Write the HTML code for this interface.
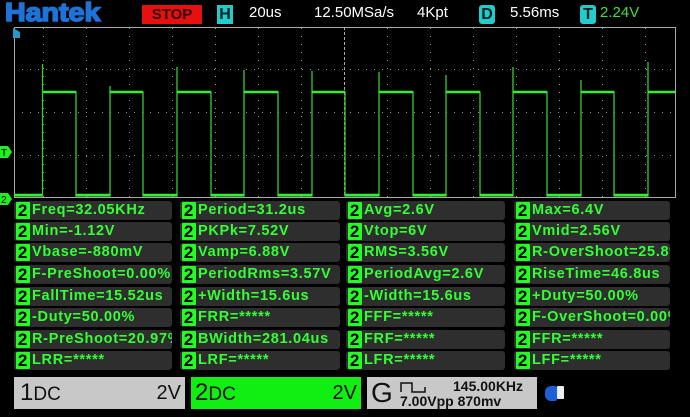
<!DOCTYPE html>
<html><head><meta charset="utf-8"><style>
body{margin:0;width:690px;height:414px;background:#000;overflow:hidden;position:relative;font-family:"Liberation Sans",sans-serif}
.a{position:absolute}
.hd{color:#fff;font-size:15px;top:4px}
.box{position:absolute;background:#2e2e2e;border-radius:3px;height:19px;overflow:hidden;color:#3f3;font-size:14.5px;font-weight:bold;line-height:19px;white-space:nowrap;letter-spacing:0.7px}
.box b{display:inline-block;background:#2f2;color:#000;width:14px;height:17px;line-height:17px;text-align:center;margin:1px 2px 0 2px;font-size:17px;vertical-align:top;border-radius:1px}
.ch{position:absolute;top:377px;height:32px;font-size:24px;line-height:32px}
</style></head><body>
<div class="a" style="left:5px;top:-3px;color:#1e73d8;font-size:26px;font-weight:900;-webkit-text-stroke:1.6px #1e73d8;letter-spacing:0px;transform:scaleX(1.1);transform-origin:left">Hantek</div>
<div class="a" style="left:142px;top:5px;width:60px;height:19px;background:#e61010;color:#300;font-weight:bold;font-size:15px;text-align:center;line-height:19px">STOP</div>
<div class="a" style="left:217px;top:5px;width:16px;height:19px;background:#2cc;color:#022;font-weight:bold;font-size:16px;text-align:center;line-height:19px">H</div>
<div class="a hd" style="left:249px">20us</div>
<div class="a hd" style="left:314px">12.50MSa/s</div>
<div class="a hd" style="left:417px">4Kpt</div>
<div class="a" style="left:479px;top:5px;width:16px;height:19px;background:#2cc;color:#022;font-weight:bold;font-size:16px;text-align:center;line-height:19px;border-radius:3px">D</div>
<div class="a hd" style="left:510px">5.56ms</div>
<div class="a" style="left:580px;top:5px;width:16px;height:19px;background:#2cc;color:#022;font-weight:bold;font-size:16px;text-align:center;line-height:19px;border-radius:3px">T</div>
<div class="a hd" style="left:600px;color:#4d4">2.24V</div>
<svg class="a" style="left:0;top:0" width="690" height="414">
<g stroke="#aaa" stroke-width="1" fill="none">
<line x1="14" y1="27.5" x2="676" y2="27.5"/>
<line x1="14.5" y1="27" x2="14.5" y2="198"/>
<line x1="675.5" y1="27" x2="675.5" y2="198"/>
<line x1="14" y1="197.5" x2="676" y2="197.5"/>
<line x1="344.5" y1="27" x2="344.5" y2="198" stroke-dasharray="3,2"/>
</g>
<g stroke="#999" stroke-width="1" stroke-dasharray="1,7">
<line x1="14" y1="69.5" x2="676" y2="69.5"/><line x1="14" y1="112.5" x2="676" y2="112.5"/><line x1="14" y1="155.5" x2="676" y2="155.5"/>
<line x1="43.5" y1="28" x2="43.5" y2="198"/><line x1="86.5" y1="28" x2="86.5" y2="198"/><line x1="129.5" y1="28" x2="129.5" y2="198"/><line x1="172.5" y1="28" x2="172.5" y2="198"/><line x1="215.5" y1="28" x2="215.5" y2="198"/><line x1="258.5" y1="28" x2="258.5" y2="198"/><line x1="301.5" y1="28" x2="301.5" y2="198"/>
<line x1="387.5" y1="28" x2="387.5" y2="198"/><line x1="430.5" y1="28" x2="430.5" y2="198"/><line x1="473.5" y1="28" x2="473.5" y2="198"/><line x1="516.5" y1="28" x2="516.5" y2="198"/><line x1="559.5" y1="28" x2="559.5" y2="198"/><line x1="602.5" y1="28" x2="602.5" y2="198"/><line x1="645.5" y1="28" x2="645.5" y2="198"/>
</g>
<polygon points="13,28 20,32 20,38 13,38" fill="#29c"/>
<path d="M14,196 H42.5 V64 V92 H76 V196 H110 V86 V92 H143 V196 H177 V67 V92 H211 V196 H244 V70 V92 H278 V196 H312 V71 V92 H345 V196 H379 V72 V92 H413 V196 H446 V75 V92 H480 V196 H513 V67 V92 H547 V196 H581 V80 V92 H614 V196 H648 V62 V92 H675" stroke="#3c3" stroke-width="1.3" fill="none"/>
<path d="M43,92 H76 M110,92 H143 M177,92 H211 M244,92 H278 M312,92 H345 M379,92 H413 M446,92 H480 M513,92 H547 M581,92 H614 M648,92 H675 M14,195 H42 M76,195 H110 M143,195 H177 M211,195 H244 M278,195 H312 M345,195 H379 M413,195 H446 M480,195 H513 M547,195 H581 M614,195 H648" stroke="#3e3" stroke-width="2.5"/>
<polygon points="0,146 8,146 12,152 8,158 0,158" fill="#2e2"/>
<text x="1" y="156" font-size="10" font-family="Liberation Sans" fill="#000">T</text>
<polygon points="0,193 8,193 12,199 8,205 0,205" fill="#2e2"/>
<text x="1" y="203" font-size="10" font-family="Liberation Sans" fill="#000">2</text>
</svg>
<div class="box" style="left:14px;top:201px;width:158px"><b>2</b>Freq=32.05KHz</div>
<div class="box" style="left:180px;top:201px;width:160px"><b>2</b>Period=31.2us</div>
<div class="box" style="left:346px;top:201px;width:159px"><b>2</b>Avg=2.6V</div>
<div class="box" style="left:514px;top:201px;width:156px"><b>2</b>Max=6.4V</div>
<div class="box" style="left:14px;top:222px;width:158px"><b>2</b>Min=-1.12V</div>
<div class="box" style="left:180px;top:222px;width:160px"><b>2</b>PKPk=7.52V</div>
<div class="box" style="left:346px;top:222px;width:159px"><b>2</b>Vtop=6V</div>
<div class="box" style="left:514px;top:222px;width:156px"><b>2</b>Vmid=2.56V</div>
<div class="box" style="left:14px;top:243px;width:158px"><b>2</b>Vbase=-880mV</div>
<div class="box" style="left:180px;top:243px;width:160px"><b>2</b>Vamp=6.88V</div>
<div class="box" style="left:346px;top:243px;width:159px"><b>2</b>RMS=3.56V</div>
<div class="box" style="left:514px;top:243px;width:156px"><b>2</b>R-OverShoot=25.8%</div>
<div class="box" style="left:14px;top:265px;width:158px"><b>2</b>F-PreShoot=0.00%</div>
<div class="box" style="left:180px;top:265px;width:160px"><b>2</b>PeriodRms=3.57V</div>
<div class="box" style="left:346px;top:265px;width:159px"><b>2</b>PeriodAvg=2.6V</div>
<div class="box" style="left:514px;top:265px;width:156px"><b>2</b>RiseTime=46.8us</div>
<div class="box" style="left:14px;top:287px;width:158px"><b>2</b>FallTime=15.52us</div>
<div class="box" style="left:180px;top:287px;width:160px"><b>2</b>+Width=15.6us</div>
<div class="box" style="left:346px;top:287px;width:159px"><b>2</b>-Width=15.6us</div>
<div class="box" style="left:514px;top:287px;width:156px"><b>2</b>+Duty=50.00%</div>
<div class="box" style="left:14px;top:308px;width:158px"><b>2</b>-Duty=50.00%</div>
<div class="box" style="left:180px;top:308px;width:160px"><b>2</b>FRR=*****</div>
<div class="box" style="left:346px;top:308px;width:159px"><b>2</b>FFF=*****</div>
<div class="box" style="left:514px;top:308px;width:156px"><b>2</b>F-OverShoot=0.00%</div>
<div class="box" style="left:14px;top:330px;width:158px"><b>2</b>R-PreShoot=20.97%</div>
<div class="box" style="left:180px;top:330px;width:160px"><b>2</b>BWidth=281.04us</div>
<div class="box" style="left:346px;top:330px;width:159px"><b>2</b>FRF=*****</div>
<div class="box" style="left:514px;top:330px;width:156px"><b>2</b>FFR=*****</div>
<div class="box" style="left:14px;top:351px;width:158px"><b>2</b>LRR=*****</div>
<div class="box" style="left:180px;top:351px;width:160px"><b>2</b>LRF=*****</div>
<div class="box" style="left:346px;top:351px;width:159px"><b>2</b>LFR=*****</div>
<div class="box" style="left:514px;top:351px;width:156px"><b>2</b>LFF=*****</div>
<div class="ch" style="left:14px;width:171px;background:#c8c8c8;color:#111"><span style="margin-left:6px">1<span style="font-size:19px">DC</span></span><span style="position:absolute;right:4px;font-size:20px">2V</span></div>
<div class="ch" style="left:191px;width:170px;background:#1e1;color:#111"><span style="margin-left:4px">2<span style="font-size:19px">DC</span></span><span style="position:absolute;right:4px;font-size:20px">2V</span></div>
<div class="ch" style="left:367px;width:170px;background:#c8c8c8;color:#111"><span style="margin-left:4px;font-size:28px">G</span>
<svg class="a" style="left:33px;top:4px" width="30" height="12"><path d="M1,11 V2 H12 V11 H25 V6" stroke="#111" stroke-width="1.5" fill="none"/></svg>
<span class="a" style="left:86px;top:-7px;font-size:14px;font-weight:bold">145.00KHz</span>
<span class="a" style="left:33px;top:8px;font-size:14px;font-weight:bold">7.00Vpp 870mv</span></div>
<div class="a" style="left:545px;top:386px;width:12px;height:15px;background:#1c5fd8;border-radius:6px 2px 2px 6px"></div>
<div class="a" style="left:557px;top:386px;width:7px;height:13px;background:#eee;border-radius:1px"></div>
</body></html>
